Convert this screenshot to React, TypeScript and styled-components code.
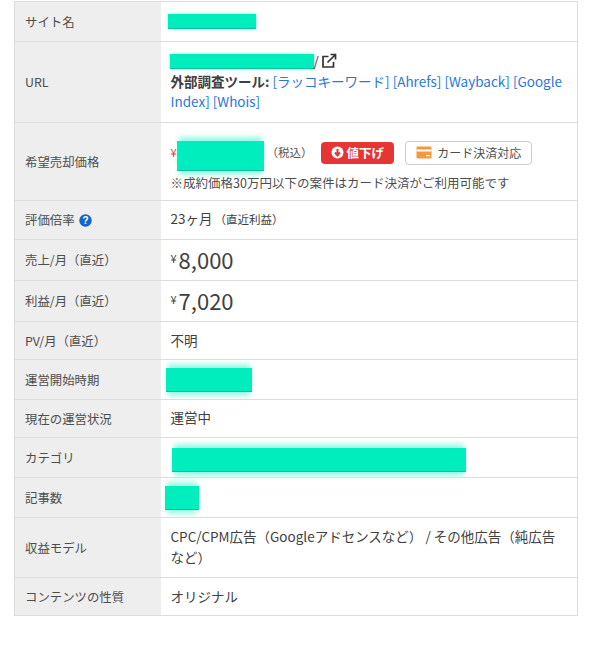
import React from "react";
import styled, { createGlobalStyle } from "styled-components";

const Global = createGlobalStyle`
  html, body { margin: 0; padding: 0; background: #fff; }
  body { font-family: "Noto Sans CJK JP", "Noto Sans", sans-serif; color: #3c3c3c; }
`;
const Page = styled.div`
  padding: 1px 22px 0 14px;
`;
const Table = styled.table`
  width: 564px;
  border-collapse: collapse;
  table-layout: fixed;
  border: 1px solid #ddd;
`;
const Row = styled.tr<{ $h: number }>`
  height: ${(p) => p.$h}px;
  border-bottom: 1px solid #ddd;
`;
const Label = styled.th`
  width: 146px;
  background: #eee;
  padding: 0 10px;
  font-size: 12.4px;
  font-weight: 400;
  color: #4d4d4d;
  text-align: left;
  vertical-align: middle;
  box-sizing: border-box;
`;
const Value = styled.td<{ $pb?: number }>`
  padding: 0 10px ${(p) => p.$pb ?? 2}px 10px;
  font-size: 13.5px;
  line-height: 21px;
  color: #404040;
  vertical-align: middle;
`;
const UrlValue = styled(Value)`
  line-height: 20px;
`;
const PriceValue = styled(Value)`
  padding-top: 6px;
  padding-bottom: 0;
`;
const Redact = styled.span<{ $w: number; $h: number; $ml?: number; $mt?: number; $glow?: boolean }>`
  display: block;
  flex: none;
  width: ${(p) => p.$w}px;
  height: ${(p) => p.$h}px;
  margin-left: ${(p) => p.$ml ?? 0}px;
  margin-top: ${(p) => p.$mt ?? 0}px;
  background: #00edbd;
  border-bottom: 1px solid #0cc29c;
  box-sizing: border-box;
  box-shadow: ${(p) =>
    p.$glow
      ? "0 -6px 5px -2px #00edbd66, 0 6px 5px -2px #00edbd66"
      : "0 0 3px #00edbd99"};
`;
const Small = styled.span`
  font-size: 11.5px;
  margin-left: 2px;
`;
const Strong = styled.strong`
  font-weight: 700;
`;
const Tool = styled.a`
  color: #2b78d6;
  text-decoration: none;
`;
const Line = styled.div`
  display: flex;
  align-items: center;
`;
const Slash = styled.span`
  margin: 0 2px 0 0;
`;
const Price = styled(Line)`
  height: 30px;
`;
const Yen = styled.span<{ $red?: boolean }>`
  font-size: 11px;
  color: ${(p) => (p.$red ? "#e8344a" : "#404040")};
  margin-right: ${(p) => (p.$red ? 0 : 2)}px;
`;
const Tax = styled.span`
  font-size: 11.5px;
  color: #555;
  margin-left: 3px;
`;
const DownBadge = styled.span`
  display: inline-flex;
  align-items: center;
  gap: 3px;
  height: 22px;
  margin-left: 8px;
  padding: 0 10px;
  border-radius: 4px;
  background: #e53535;
  color: #fff;
  font-size: 12.5px;
  font-weight: 700;
`;
const CardBadge = styled.span`
  display: inline-flex;
  align-items: center;
  gap: 5px;
  height: 22px;
  margin-left: 11px;
  padding: 0 10px;
  border: 1px solid #ccc;
  border-radius: 4px;
  background: #fff;
  font-size: 12px;
  color: #4d4d4d;
`;
const Note = styled.div`
  font-size: 12.5px;
  line-height: 18px;
  margin-top: 6px;
  color: #4d4d4d;
`;
const Amount = styled.span`
  font-size: 22px;
  line-height: 30px;
  vertical-align: middle;
`;
const Help = styled.svg`
  vertical-align: -2px;
  margin-left: 4px;
`;

const Down = () => (
  <svg width="13" height="13" viewBox="0 0 13 13">
    <circle cx="6.5" cy="6.5" r="6" fill="#fff" />
    <path d="M6.5 3v5M4 6.5l2.5 3 2.5-3" stroke="#e53535" strokeWidth="2" fill="none" />
  </svg>
);
const Card = () => (
  <svg width="16" height="13" viewBox="0 0 16 13">
    <rect x="0.5" y="0.5" width="15" height="12" rx="1" fill="#f39a3c" />
    <rect x="0.5" y="3.5" width="15" height="2" fill="#fff" />
    <rect x="10" y="9" width="4" height="1.2" fill="#fff" />
  </svg>
);
const External = () => (
  <svg width="16" height="16" viewBox="0 0 16 16" fill="none" stroke="#333" strokeWidth="1.7">
    <path d="M7.5 3.5H2v10.5h10.5V9" />
    <path d="M6.5 9.5 14 2M9.5 1.5h5v5" />
  </svg>
);

export default function App() {
  return (
    <Page>
      <Global />
      <Table>
        <tbody>
          <Row $h={40}>
            <Label>サイト名</Label>
            <Value><Redact $w={88} $h={15} $ml={-3} $mt={1} /></Value>
          </Row>
          <Row $h={81}>
            <Label>URL</Label>
            <UrlValue>
              <Line><Redact $w={144} $h={15} $ml={-1} /><Slash>/</Slash><External /></Line>
              <Strong>外部調査ツール: </Strong>
              <Tool>[ラッコキーワード]</Tool> <Tool>[Ahrefs]</Tool> <Tool>[Wayback]</Tool> <Tool>[Google Index]</Tool> <Tool>[Whois]</Tool>
            </UrlValue>
          </Row>
          <Row $h={78}>
            <Label>希望売却価格</Label>
            <PriceValue>
              <Price>
                <Yen $red>¥</Yen>
                <Redact $w={87} $h={30} $ml={0} $mt={7} $glow />
                <Tax>（税込）</Tax>
                <DownBadge><Down />値下げ</DownBadge>
                <CardBadge><Card />カード決済対応</CardBadge>
              </Price>
              <Note>※成約価格30万円以下の案件はカード決済がご利用可能です</Note>
            </PriceValue>
          </Row>
          <Row $h={39}>
            <Label>
              評価倍率
              <Help width="13" height="13" viewBox="0 0 13 13">
                <circle cx="6.5" cy="6.5" r="6.2" fill="#1166c8" />
                <text x="6.5" y="10" textAnchor="middle" fontSize="10" fontWeight="700" fill="#fff" fontFamily="Liberation Sans">?</text>
              </Help>
            </Label>
            <Value>23ヶ月<Small>（直近利益）</Small></Value>
          </Row>
          <Row $h={41}>
            <Label>売上/月（直近）</Label>
            <Value><Yen>¥</Yen><Amount>8,000</Amount></Value>
          </Row>
          <Row $h={41}>
            <Label>利益/月（直近）</Label>
            <Value><Yen>¥</Yen><Amount>7,020</Amount></Value>
          </Row>
          <Row $h={38}>
            <Label>PV/月（直近）</Label>
            <Value $pb={0}>不明</Value>
          </Row>
          <Row $h={40}>
            <Label>運営開始時期</Label>
            <Value><Redact $w={86} $h={24} $ml={-5} $mt={2} $glow /></Value>
          </Row>
          <Row $h={38}>
            <Label>現在の運営状況</Label>
            <Value>運営中</Value>
          </Row>
          <Row $h={40}>
            <Label>カテゴリ</Label>
            <Value><Redact $w={294} $h={24} $ml={1} $mt={6} $glow /></Value>
          </Row>
          <Row $h={40}>
            <Label>記事数</Label>
            <Value><Redact $w={34} $h={24} $ml={-6} $mt={2} $glow /></Value>
          </Row>
          <Row $h={60}>
            <Label>収益モデル</Label>
            <Value>CPC/CPM広告（Googleアドセンスなど） / その他広告（純広告など）</Value>
          </Row>
          <Row $h={38}>
            <Label>コンテンツの性質</Label>
            <Value $pb={0}>オリジナル</Value>
          </Row>
        </tbody>
      </Table>
    </Page>
  );
}
